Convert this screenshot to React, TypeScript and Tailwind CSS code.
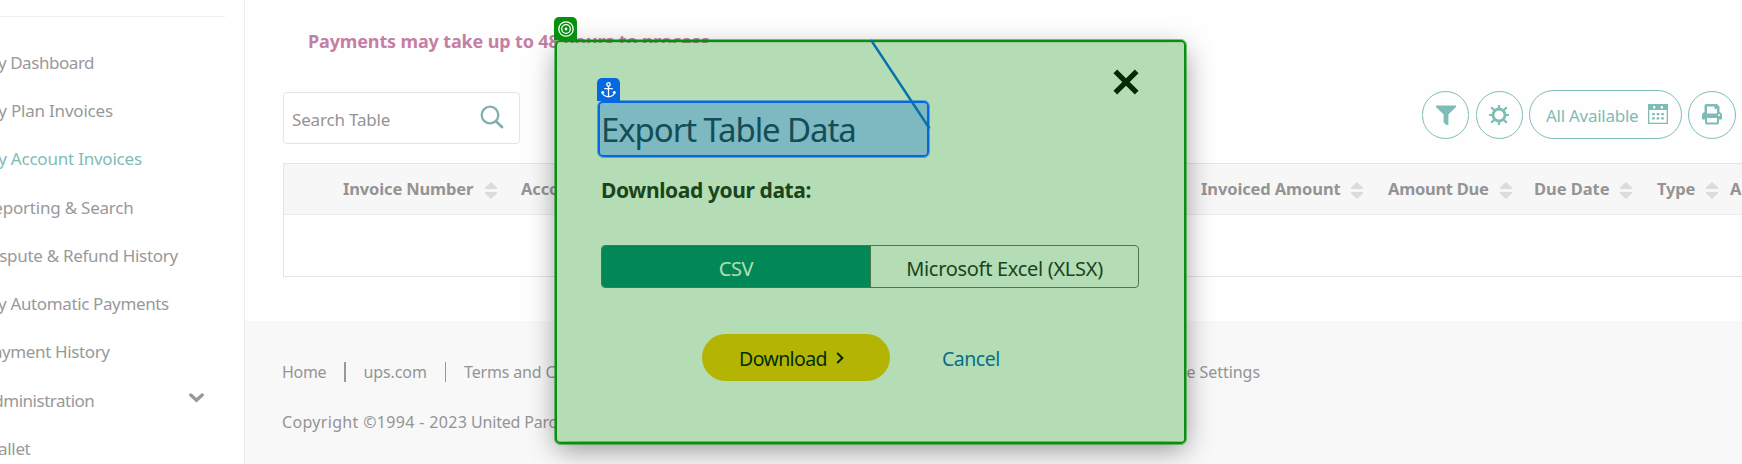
import React from "react";

const NAV = [
  { label: "My Dashboard", cls: "tracking-[-0.45px]" },
  { label: "My Plan Invoices", cls: "tracking-[-0.2px]" },
  { label: "My Account Invoices", cls: "tracking-[-0.22px] text-[#80bcb7]" },
  { label: "Reporting & Search", cls: "tracking-[-0.22px]" },
  { label: "Dispute & Refund History", cls: "tracking-[-0.3px]" },
  { label: "My Automatic Payments", cls: "tracking-[-0.37px]" },
  { label: "Payment History", cls: "tracking-[-0.38px]" },
  { label: "Administration", cls: "tracking-[-0.5px]", open: true },
  { label: "Wallet", cls: "tracking-[-0.35px]" },
];

function Sort() {
  return (
    <svg className="mt-0.5 h-[17px] w-3 shrink-0 fill-[#dcdcdc]" viewBox="0 0 12 17">
      <path d="M6 0 12 5.5V7H0V5.5Z M0 10H12V11.5L6 17 0 11.5Z" />
    </svg>
  );
}

function Column({ label, width, text }: { label: string; width: string; text: string }) {
  return (
    <div className={"flex shrink-0 items-center " + width}>
      <span className={"shrink-0 whitespace-nowrap " + text}>{label}</span>
      <Sort />
    </div>
  );
}

function Toolbar() {
  return (
    <div className="flex items-center text-[#80bcb7]">
      <button className="mr-[7px] flex h-12 w-[47px] items-center justify-center rounded-full border border-[#80bcb7]">
        <svg className="h-5 w-5 fill-current" viewBox="0 0 20 20">
          <path d="M0 .5H20V2L12.4 9.5V20H10.5L7.6 17.5V9.5L0 2Z" />
        </svg>
      </button>
      <button className="mr-1.5 flex h-12 w-[47px] items-center justify-center rounded-full border border-[#80bcb7]">
        <svg className="-ml-0.5 h-5 w-5" viewBox="0 0 20 20" fill="none" stroke="currentColor">
          <circle cx="10" cy="10" r="6" strokeWidth="2.8" />
          <path
            d="M10 0V4M10 16V20M0 10H4M16 10H20M2.2 2.2 5.3 5.3M14.7 14.7 17.8 17.8M2.2 17.8 5.3 14.7M14.7 5.3 17.8 2.2"
            strokeWidth="2.2"
          />
        </svg>
      </button>
      <button className="mr-1.5 flex h-[49px] w-[153px] items-center rounded-full border border-[#80bcb7] pl-4">
        <span className="w-[102px] whitespace-nowrap pt-0.5 text-left text-[17px] tracking-[-0.27px]">All Available</span>
        <svg className="-mt-0.5 h-5 w-5" viewBox="0 0 20 20">
          <path fill="currentColor" fillRule="evenodd" d="M0 0H20V20H0ZM1.3 6V18.7H18.7V6Z" />
          <path stroke="#fff" strokeWidth="2.4" strokeLinecap="round" d="M6.2 3.2V3.4M13.8 3.2V3.4" />
          <path
            fill="currentColor"
            d="M4.2 9h2.6v2.2H4.2zM8.7 9h2.6v2.2H8.7zM13.2 9h2.6v2.2h-2.6zM4.2 13.2h2.6v2.2H4.2zM8.7 13.2h2.6v2.2H8.7zM13.2 13.2h2.6v2.2h-2.6z"
          />
        </svg>
      </button>
      <button className="flex h-12 w-12 items-center justify-center rounded-full border border-[#80bcb7]">
        <svg className="h-[21px] w-5" viewBox="0 0 20 21">
          <path
            fill="currentColor"
            fillRule="evenodd"
            d="M4 0H15L17.5 2.5V8H18L20 10V15.5H17V18.5Q17 20.5 15 20.5H5Q3 20.5 3 18.5V15.5H0V10L2 8H2.5V2Q2.5 0 4 0ZM5 2.5V9.5H15V5H12.5V2.5ZM5 14V18.5H15V14ZM16.2 10.2H18V12H16.2Z"
          />
        </svg>
      </button>
    </div>
  );
}

function Dialog() {
  return (
    <div className="flex h-[398px] w-[628px] flex-col rounded-[3px] bg-white pl-[44px] text-[#242424] shadow-[0_8px_28px_rgba(0,0,0,0.42)]">
      <div className="flex h-[100px] justify-between pr-[46px]">
        <h1 className="mt-[64px] h-[46px] whitespace-nowrap text-[33px] leading-[46px] tracking-[-1.1px]">Export Table Data</h1>
        <svg className="mt-[26px] h-[26px] w-[26px]" viewBox="0 0 26 26">
          <path d="M2.3 2.3 23.7 23.7M23.7 2.3 2.3 23.7" stroke="#000" strokeWidth="5.2" />
        </svg>
      </div>
      <p className="mt-[32px] h-[30px] whitespace-nowrap text-[21px] font-bold leading-[30px] tracking-[-0.39px]">Download your data:</p>
      <div className="mt-[40px] flex h-[43px] w-[538px] overflow-hidden rounded border border-[#6c6c6c] text-[20px] leading-[45px]">
        <div className="w-[269px] border-r border-[#6c6c6c] bg-[#008577] text-center tracking-[-0.4px] text-white">CSV</div>
        <div className="flex-1 text-center tracking-[-0.3px]">Microsoft Excel (XLSX)</div>
      </div>
      <div className="mt-[46px] flex h-[47px] items-center">
        <button className="ml-[101px] flex h-[47px] w-[188px] items-center rounded-full bg-[#ffc400] pl-[37px] text-[19.5px]">
          <span className="w-[97px] pt-[3px] text-left tracking-[-0.6px] text-black">Download</span>
          <svg className="h-3 w-2" viewBox="0 0 8 12">
            <path d="M1.2 1 6.4 6 1.2 11" fill="none" stroke="#000" strokeWidth="2" />
          </svg>
        </button>
        <span className="ml-[52px] pt-[3px] text-[19.5px] tracking-[-0.5px] text-[#0662bb]">Cancel</span>
      </div>
    </div>
  );
}

export default function App() {
  return (
    <div className="relative flex h-[464px] w-[1742px] overflow-hidden bg-white font-['Noto_Sans',sans-serif] text-[#999]">
      <aside className="flex w-[245px] shrink-0 flex-col overflow-hidden border-r border-[#ececec]">
        <div className="h-[17px] w-[225px] shrink-0 border-b border-[#eee]" />
        <nav className="mt-[21.5px] flex flex-col text-[17px]">
          {NAV.map((n) => (
            <div key={n.label} className="flex h-[48.25px] shrink-0 items-center justify-between pr-[40px]">
              <span className={"-ml-[17px] whitespace-nowrap " + n.cls}>{n.label}</span>
              {n.open && (
                <svg className="-mt-1 h-[10px] w-[15px]" viewBox="0 0 15 10">
                  <path d="M1.8 2 7.5 7.2 13.2 2" fill="none" stroke="#999" strokeWidth="3.4" strokeLinecap="round" />
                </svg>
              )}
            </div>
          ))}
        </nav>
      </aside>

      <main className="flex min-w-0 flex-1 flex-col overflow-hidden text-[#949494]">
        <section className="flex h-[321px] shrink-0 flex-col bg-[#fefefe] pl-[38px]">
          <p className="ml-[25px] mt-[26px] h-[30px] whitespace-nowrap text-[18px] font-bold leading-[30px] tracking-[-0.14px] text-[#c67fa4]">
            Payments may take up to 48 hours to process.
          </p>
          <div className="mt-[34px] flex h-[53px] items-start justify-between pr-1.5">
            <div className="mt-0.5 flex h-[52px] w-[237px] items-center justify-between rounded border border-[#e4e4e4] bg-white pl-2 pr-[15px]">
              <span className="whitespace-nowrap pt-[3px] text-[17px] tracking-[-0.18px]">Search Table</span>
              <svg className="-mt-0.5 h-6 w-6" viewBox="0 0 24 24" fill="none" stroke="#7fb2ae" strokeLinecap="round">
                <circle cx="10" cy="10" r="8.3" strokeWidth="2.3" />
                <path d="M16.2 16.4 22 22" strokeWidth="2.8" />
              </svg>
            </div>
            <Toolbar />
          </div>
          <div className="mt-5 flex h-[114px] w-[1500px] flex-col border border-[#e4e4e4] bg-white">
            <div className="flex h-[51px] shrink-0 items-center border-b border-[#ebebeb] bg-[#f7f7f7] pl-[59px] text-[16.5px] font-bold">
              <Column label="Invoice Number" width="w-[178px]" text="w-[142px] tracking-[-0.15px]" />
              <Column label="Account Number" width="w-[680px]" text="w-[142px] tracking-[-0.15px]" />
              <Column label="Invoiced Amount" width="w-[187px]" text="w-[150px] tracking-[-0.12px]" />
              <Column label="Amount Due" width="w-[146px]" text="w-[112px] tracking-[-0.28px]" />
              <Column label="Due Date" width="w-[123px]" text="w-[86px] tracking-[-0.05px]" />
              <Column label="Type" width="w-[73px]" text="w-[49px] tracking-[-0.15px]" />
              <span className="shrink-0">Actions</span>
            </div>
          </div>
        </section>
        <footer className="flex flex-1 flex-col bg-[#f8f8f8] pl-[37px] text-[16px] text-[#949494]">
          <div className="mt-[36px] flex h-[30px] items-center whitespace-nowrap">
            <span className="w-[62px] shrink-0 tracking-[-0.33px]">Home</span>
            <span className="mr-[18px] h-5 w-[1.5px] bg-[#989898]" />
            <span className="w-[81px] shrink-0 tracking-[-0.1px]">ups.com</span>
            <span className="mr-[18px] h-5 w-[1.5px] bg-[#989898]" />
            <span className="w-[671px] shrink-0 tracking-[-0.15px]">Terms and Conditions</span>
            <span className="w-[125px] shrink-0 text-right tracking-[-0.05px]">Cookie Settings</span>
          </div>
          <div className="mt-5 whitespace-nowrap leading-[30px]">
            <span className="tracking-[0.33px]">Copyright ©1994 - 2023</span>
            <span className="tracking-[-0.2px]"> United Parcel Service of America, Inc.</span>
          </div>
        </footer>
      </main>

      <div className="absolute left-[557px] top-[43px]">
        <Dialog />
      </div>

      <div className="absolute left-[554px] top-[39px] h-[406px] w-[633px] rounded-[6px] border border-[#078f0e]/50">
        <div className="h-full w-full rounded-[5px] border-2 border-[#078f0e] bg-[#07900e]/30 bg-clip-padding" />
      </div>
      <div className="absolute left-[554px] top-[17px] flex h-[23px] w-[23px] items-center justify-center rounded-t-[5px] bg-[#078f0e]">
        <svg className="h-4 w-4" viewBox="0 0 16 16" fill="none" stroke="#fff" strokeWidth="1.3">
          <circle cx="8" cy="8" r="7.2" />
          <circle cx="8" cy="8" r="4.3" />
          <circle cx="8" cy="8" r="1.4" fill="#fff" stroke="none" />
        </svg>
      </div>

      <div className="absolute left-[597px] top-[100px] h-[58px] w-[333px] rounded-[6px] border border-[#0568e0]/50">
        <div className="h-full w-full rounded-[5px] border-2 border-[#0568e0] bg-[#0064dc]/30 bg-clip-padding" />
      </div>
      <div className="absolute left-[597px] top-[78px] flex h-[23px] w-[23px] items-center justify-center rounded-t-[5px] bg-[#0568e0]">
        <svg className="h-4 w-[15px]" viewBox="0 0 15 16" fill="none" stroke="#fff" strokeWidth="1.3">
          <circle cx="7.5" cy="2.4" r="1.7" />
          <path d="M7.5 4.2V14.8M3.2 6.7H11.8M1.4 9.8C1.6 12.6 4 14.6 7.5 14.8 11 14.6 13.4 12.6 13.6 9.8M.5 11.4 1.4 9.6 3.2 10.6M14.5 11.4 13.6 9.6 11.8 10.6" />
        </svg>
      </div>

      <svg className="pointer-events-none absolute left-0 top-0 h-[464px] w-[1742px]" viewBox="0 0 1742 464">
        <path d="M871 40 929.5 128.5" stroke="#0572a8" strokeWidth="2.4" />
      </svg>
    </div>
  );
}
